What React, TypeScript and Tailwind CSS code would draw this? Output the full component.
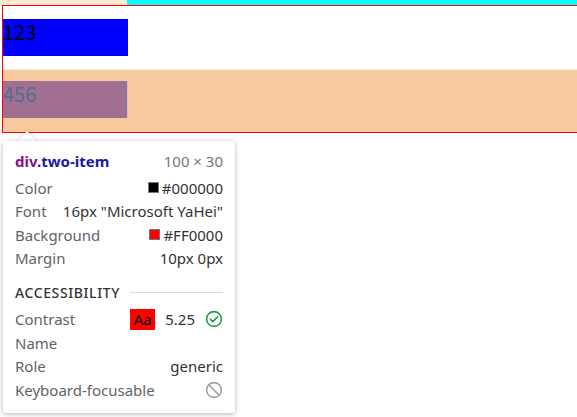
import React from "react";

const rows = [
  { label: "Color", value: "#000000", swatch: "bg-black" },
  { label: "Font", value: '16px "Microsoft YaHei"' },
  { label: "Background", value: "#FF0000", swatch: "bg-[#ff0000]" },
  { label: "Margin", value: "10px 0px" },
];

function CheckCircle() {
  return (
    <svg width="18" height="18" viewBox="0 0 18 18" fill="none" stroke="#1e9e3c" strokeWidth="1.6">
      <circle cx="9" cy="9" r="7.4" />
      <path d="M5.4 9.2l2.4 2.4 4.8-4.9" strokeLinecap="round" strokeLinejoin="round" />
    </svg>
  );
}

function NoEntry() {
  return (
    <svg width="18" height="18" viewBox="0 0 18 18" fill="none" stroke="#9aa0a6" strokeWidth="1.6">
      <circle cx="9" cy="9" r="7.4" />
      <path d="M4 4l10 10" />
    </svg>
  );
}

export default function App() {
  return (
    <div className="relative w-[577px] h-[417px] overflow-hidden bg-white font-['Noto_Sans','Liberation_Sans',sans-serif]">
      {/* top strip */}
      <div className="flex h-[5px]">
        <div className="w-[127px] bg-[#fde9d0]" />
        <div className="flex-1 bg-[#00ffff]" />
      </div>

      {/* container */}
      <div className="ml-[2px] border border-r-0 border-[#ff0000]">
        <div className="h-[63px] pt-[13px]">
          <div className="w-[125px] h-[37px] bg-[#0000ff] text-[20px] leading-[26px] text-black font-['Noto_Sans_CJK_SC','Noto_Sans',sans-serif]">
            123
          </div>
        </div>
        <div className="h-[63px] pt-[11px] bg-[#f6ca9e] border-t border-[#fbeee2]">
          <div className="w-[125px] h-[37px] bg-[#a06f91] border-r border-[#c9c4cc] text-[20px] leading-[26px] text-[#4a6f91] font-['Noto_Sans_CJK_SC','Noto_Sans',sans-serif]">
            456
          </div>
        </div>
      </div>

      {/* devtools tooltip */}
      <div className="absolute left-[20px] top-[134px] w-[14px] h-[14px] rotate-45 bg-white shadow-[0_0_4px_rgba(0,0,0,0.2)]" />
      <div className="absolute left-[3px] top-[141px] w-[232px] h-[272px] rounded-[3px] bg-white shadow-[0_1px_5px_rgba(0,0,0,0.3)] px-[12px] pt-[8px] text-[15px] text-[#555]">
        <div className="absolute left-[17px] top-0 w-[20px] h-[10px] bg-white" />
        <div className="relative flex justify-between items-center h-[24px]">
          <span className="font-bold">
            <span className="text-[#881280]">div</span>
            <span className="text-[#1a1aa6]">.two-item</span>
          </span>
          <span className="text-[#777]">100 × 30</span>
        </div>
        <div className="mt-[3px]">
          {rows.map((r) => (
            <div key={r.label} className="flex justify-between items-center h-[23.6px]">
              <span className="text-[#5f6368]">{r.label}</span>
              <span className="flex items-center gap-[3px] text-[#333]">
                {r.swatch && <span className={`w-[11px] h-[11px] border border-[#777] ${r.swatch}`} />}
                {r.value}
              </span>
            </div>
          ))}
        </div>
        <div className="flex items-center gap-[10px] mt-[10px] h-[24px]">
          <span className="text-[14px] font-medium tracking-[0.6px] text-[#333]">ACCESSIBILITY</span>
          <div className="flex-1 h-px bg-[#dcdcdc]" />
        </div>
        <div className="mt-[3px]">
          <div className="flex justify-between items-center h-[23.6px]">
            <span className="text-[#5f6368]">Contrast</span>
            <span className="flex items-center">
              <span className="w-[25px] h-[21px] bg-[#ff0000] text-black text-center leading-[21px]">Aa</span>
              <span className="ml-[10px] text-[#333]">5.25</span>
              <span className="ml-[10px]">
                <CheckCircle />
              </span>
            </span>
          </div>
          <div className="flex justify-between items-center h-[23.6px]">
            <span className="text-[#5f6368]">Name</span>
          </div>
          <div className="flex justify-between items-center h-[23.6px]">
            <span className="text-[#5f6368]">Role</span>
            <span className="text-[#333]">generic</span>
          </div>
          <div className="flex justify-between items-center h-[23.6px]">
            <span className="text-[#5f6368]">Keyboard-focusable</span>
            <NoEntry />
          </div>
        </div>
      </div>
    </div>
  );
}
